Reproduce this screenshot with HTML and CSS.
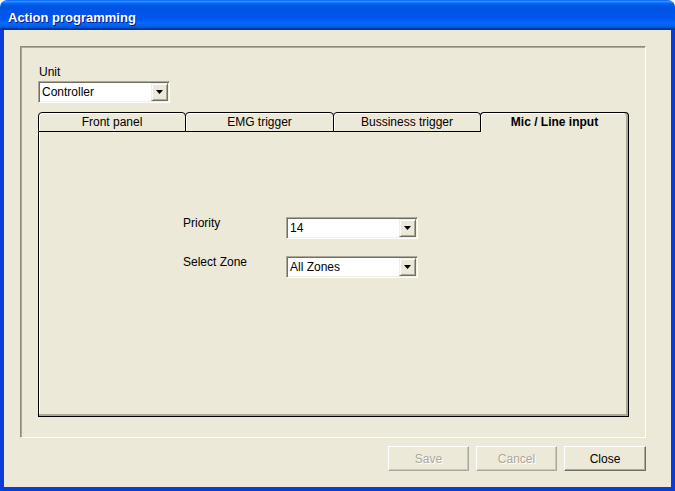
FILE: index.html
```html
<!DOCTYPE html>
<html>
<head>
<meta charset="utf-8">
<link rel="stylesheet" href="styles.css">
</head>
<body>
<div class="window">
  <div class="titlebar"><span class="title">Action programming</span></div>
  <div class="client">
    <div class="group">
      <div class="unit-label">Unit</div>
      <div class="combo unit-combo">
        <span class="combo-text">Controller</span>
        <span class="combo-btn"><svg width="7" height="4" viewBox="0 0 7 4"><polygon points="0,0 7,0 3.5,4" fill="#000"/></svg></span>
      </div>
      <div class="tabs">
        <div class="tab tab-a">Front panel</div>
        <div class="tab tab-b">EMG trigger</div>
        <div class="tab tab-a">Bussiness trigger</div>
        <div class="tab tab-b active">Mic / Line input</div>
      </div>
      <div class="panel">
        <div class="form">
          <div class="label">Priority</div>
          <div class="combo">
            <span class="combo-text">14</span>
            <span class="combo-btn"><svg width="7" height="4" viewBox="0 0 7 4"><polygon points="0,0 7,0 3.5,4" fill="#000"/></svg></span>
          </div>
          <div class="label">Select Zone</div>
          <div class="combo">
            <span class="combo-text">All Zones</span>
            <span class="combo-btn"><svg width="7" height="4" viewBox="0 0 7 4"><polygon points="0,0 7,0 3.5,4" fill="#000"/></svg></span>
          </div>
        </div>
      </div>
    </div>
    <div class="actions">
      <button class="btn disabled">Save</button>
      <button class="btn disabled">Cancel</button>
      <button class="btn close">Close</button>
    </div>
  </div>
</div>
</body>
</html>
```
FILE: styles.css
```css
html, body {
  margin: 0;
  padding: 0;
  background: #ffffff;
}
body {
  font-family: "Liberation Sans", Arial, sans-serif;
  font-size: 12px;
  color: #000;
}
.window {
  width: 675px;
  height: 491px;
  display: flex;
  flex-direction: column;
}
.titlebar {
  height: 30px;
  box-sizing: border-box;
  border-radius: 7px 7px 0 0;
  padding: 10px 0 0 8px;
  line-height: 15px;
  background: linear-gradient(to bottom, #0058EE 0%, #3593FF 4%, #288EFF 6%, #127DFF 8%, #036FFC 10%, #0262EE 14%, #0057E5 20%, #0054E3 24%, #0055EB 56%, #005BF5 66%, #026AFE 76%, #0062EF 86%, #0052D6 92%, #0040AB 94%, #003092 100%);
}
.title {
  color: #fff;
  font-weight: bold;
  font-size: 13px;
  text-shadow: 1px 1px #0A1883;
}
.client {
  flex: 1;
  background: #ECE9D8;
  border: 4px solid #0B3CD8;
  border-top: 0;
  padding: 16px 25px 0 16px;
  display: flex;
  flex-direction: column;
}
.group {
  height: 392px;
  box-sizing: border-box;
  border: 1px solid;
  border-color: #8E8B7E #fff #fff #8E8B7E;
  box-shadow: inset 1px 1px #ACA899;
  padding: 18px 16px 20px 17px;
  display: flex;
  flex-direction: column;
}
.unit-label {
  line-height: 14px;
  padding-left: 1px;
}
.combo {
  display: flex;
  align-items: center;
  width: 132px;
  height: 22px;
  box-sizing: border-box;
  background: #fff;
  border: 1px solid;
  border-color: #ACA899 #fff #fff #ACA899;
  box-shadow: inset 1px 1px #716F64, inset -1px -1px #F1EFE2;
  padding: 1px;
}
.unit-combo {
  margin-top: 2px;
}
.combo-text {
  flex: 1;
  padding-left: 2px;
  line-height: 14px;
}
.combo-btn {
  width: 17px;
  height: 18px;
  box-sizing: border-box;
  background: #ECE9D8;
  border: 1px solid;
  border-color: #F1EFE2 #716F64 #716F64 #F1EFE2;
  box-shadow: inset 1px 1px #fff, inset -1px -1px #ACA899;
  display: flex;
  align-items: center;
  justify-content: center;
}
.combo-btn svg {
  display: block;
}
.tabs {
  display: flex;
  height: 20px;
  margin-top: 9px;
}
.tab {
  box-sizing: border-box;
  height: 20px;
  border: 1px solid #000;
  border-radius: 4px 4px 0 0;
  display: flex;
  align-items: center;
  justify-content: center;
  background: #ECE9D8;
  box-shadow: inset 1px 1px #fff;
}
.tab + .tab {
  margin-left: -1px;
}
.tab-a { width: 148px; }
.tab-b { width: 149px; }
.tab.active {
  border-bottom: 0;
  font-weight: bold;
  padding-bottom: 1px;
  box-shadow: inset -2px 0 #ACA899, inset 1px 1px #fff;
}
.panel {
  height: 285px;
  box-sizing: border-box;
  border: 1px solid #000;
  border-top: 0;
  box-shadow: inset -2px -2px #ACA899, inset 1px 0 #fff;
  padding: 85px 0 0 144px;
}
.form {
  display: grid;
  grid-template-columns: 103px 132px;
  row-gap: 17px;
}
.label {
  line-height: 14px;
  margin-top: -1px;
}
.actions {
  display: flex;
  justify-content: flex-end;
  gap: 7px;
  margin-top: 8px;
}
.btn {
  width: 81px;
  height: 25px;
  box-sizing: border-box;
  padding: 0;
  margin: 0;
  font: inherit;
  color: #000;
  background: #ECE9D8;
  border: 1px solid;
  border-color: #fff #716F64 #716F64 #fff;
  box-shadow: inset -1px -1px #ACA899;
  display: flex;
  align-items: center;
  justify-content: center;
}
.btn.disabled {
  color: #ACA899;
  text-shadow: 1px 1px #fff;
  border-color: #fff #ACA899 #ACA899 #fff;
  box-shadow: inset -1px -1px #CBC7B8;
}
.btn.close {
  width: 82px;
}
```
